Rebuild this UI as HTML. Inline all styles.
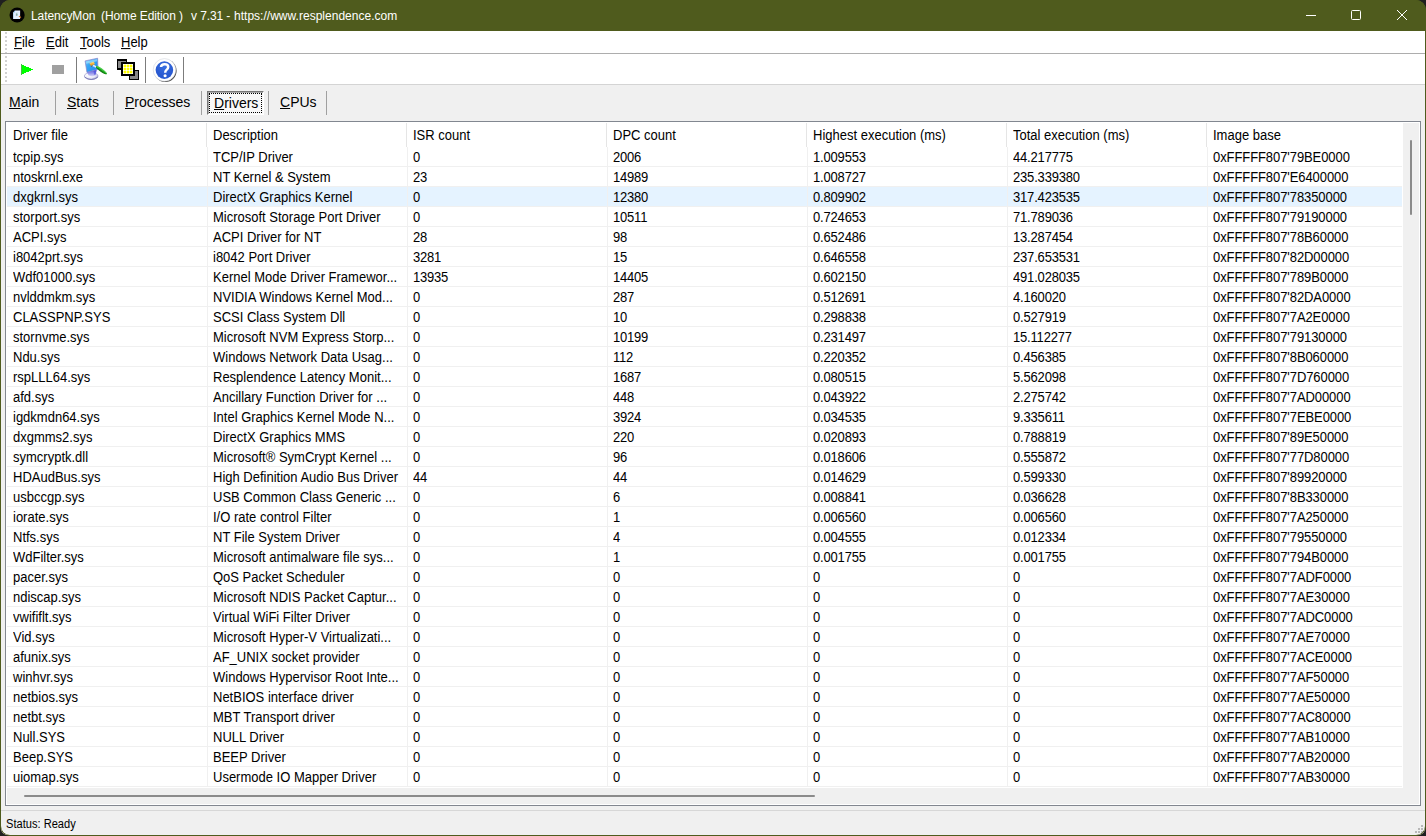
<!DOCTYPE html>
<html lang="en">
<head>
<meta charset="utf-8">
<title>LatencyMon</title>
<style>
html,body{margin:0;padding:0;}
body{width:1426px;height:836px;overflow:hidden;background:#202020;font-family:"Liberation Sans",Arial,sans-serif;color:#000;}
#win{position:absolute;left:0;top:0;width:1426px;height:836px;box-sizing:border-box;background:#4f5b1d;border-radius:10px;overflow:hidden;}
#client{left:1px;top:31px;width:1424px;height:804px;background:#f0f0f0;}
#frame{position:absolute;left:0;top:0;width:1426px;height:836px;box-sizing:border-box;border:1px solid #4f5b1d;border-radius:10px;pointer-events:none;z-index:50;}
.abs{position:absolute;}
#title{left:0;top:0;width:1426px;height:31px;background:#4f5b1d;}
#ttext,.tt{left:31px;top:9px;font-size:12px;line-height:15px;color:#fff;white-space:nowrap;letter-spacing:-0.1px;}
#menubar{left:1px;top:31px;width:1424px;height:22px;background:#fff;}
.mi{top:35px;font-size:13px;line-height:15px;white-space:nowrap;transform:scaleY(1.075);transform-origin:0 12.5px;}
.mi u,.tab u{text-decoration:underline;text-decoration-thickness:1px;text-underline-offset:1px;}
#tbline1{left:1px;top:53px;width:1424px;height:1px;background:#adadad;}
#toolbar{left:1px;top:54px;width:1424px;height:30px;background:#fff;}
#tbline2{left:1px;top:84px;width:1424px;height:1px;background:#d4d4d4;}
.vsep{width:1px;background:#7c7c7c;top:57px;height:26px;}
.tsep{width:1px;background:#a0a0a0;top:91px;height:24px;}
.tab{top:94px;font-size:14px;line-height:17px;white-space:nowrap;}
#list{left:5px;top:121px;width:1416px;height:685px;box-sizing:border-box;border:1px solid #828790;background:#fff;}
#lv{left:0;top:0;width:1426px;height:836px;font-size:13px;}
.h{top:123px;height:25px;line-height:26px;white-space:nowrap;transform:scaleY(1.075);transform-origin:0 17.5px;}
.r{position:absolute;left:7px;width:1395px;height:19px;border-bottom:1px solid #f0f0f0;line-height:19px;white-space:nowrap;}
.r.sel{background:#e5f3ff;}
.c{position:absolute;top:1px;transform:scaleY(1.075);transform-origin:0 14.5px;}
.c0{left:6px}.c1{left:206px}.c2{left:406px;letter-spacing:-0.2px}.c3{left:606px;letter-spacing:-0.2px}.c4{left:806px;letter-spacing:-0.18px}.c5{left:1006px;letter-spacing:-0.18px}.c6{left:1206px;letter-spacing:-0.08px}
.cl{width:1px;background:#f0f0f0;top:147px;height:640px;}
.hl{width:1px;background:#e5e5e5;top:123px;height:24px;}
#vsb{left:1403px;top:123px;width:16px;height:681px;background:#f0f0f0;}
#hsb{left:7px;top:788px;width:1412px;height:16px;background:#f0f0f0;}
#stline{left:1px;top:810px;width:1424px;height:1px;background:#d7d7d7;}
#status{left:6px;top:817px;font-size:12px;line-height:15px;white-space:nowrap;transform:scaleX(0.925);transform-origin:0 0;}
</style>
</head>
<body>
<div id="win">
<div id="client" class="abs"></div>
<div id="title" class="abs"></div>
<svg class="abs" style="left:9px;top:7px" width="17" height="17" viewBox="0 0 17 17"><circle cx="8.1" cy="8" r="7.6" fill="#000"/><path d="M5.9 3.4 L11.1 3.4 L11.1 12 L4.2 12 L4.2 5.6 Z" fill="#e6f2ff"/><path d="M4.2 5.6 L5.9 3.4 L5.9 5.6 Z" fill="#7ab8f0"/><path d="M4.5 6 V12" stroke="#bfe6ff" stroke-width="0.7"/><ellipse cx="7.8" cy="7.4" rx="0.8" ry="1.5" fill="#86b0a4"/><path d="M6.6 5.6 L9.6 5.6 M6.4 6 V9.4" stroke="#cfe0f0" stroke-width="0.6" fill="none"/><path d="M9.9 9.1 L12 10.5" stroke="#d87828" stroke-width="1.1"/></svg>
<div id="ttext" class="abs">LatencyMon</div>
<div class="abs tt" style="left:101px">(Home Edition )</div>
<div class="abs tt" style="left:191px">v 7.31 -</div>
<div class="abs tt" style="left:234px;letter-spacing:0.02px">https://www.resplendence.com</div>
<svg class="abs" style="left:1290px;top:0" width="136" height="31" viewBox="0 0 136 31" fill="none" stroke="#fff" stroke-width="1"><path d="M16 15.5 H26"/><rect x="61.5" y="10.5" width="9" height="9" rx="1"/><path d="M107 10 L117 20 M117 10 L107 20"/></svg>
<div id="menubar" class="abs"></div>
<div class="abs mi" style="left:14px"><u>F</u>ile</div>
<div class="abs mi" style="left:46px"><u>E</u>dit</div>
<div class="abs mi" style="left:80px"><u>T</u>ools</div>
<div class="abs mi" style="left:121px"><u>H</u>elp</div>
<div id="tbline1" class="abs"></div>
<div id="toolbar" class="abs"></div>
<div id="tbline2" class="abs"></div>
<svg class="abs" style="left:0;top:31px" width="200" height="54" viewBox="0 31 200 54">
<defs>
<linearGradient id="gScr" x1="0" y1="0" x2="1" y2="1"><stop offset="0" stop-color="#7fd0ff"/><stop offset="0.4" stop-color="#36a4f4"/><stop offset="1" stop-color="#1c84ee"/></linearGradient>
<linearGradient id="gNeck" x1="0" y1="0" x2="0" y2="1"><stop offset="0" stop-color="#4a4ee0"/><stop offset="0.6" stop-color="#9c9cec"/><stop offset="1" stop-color="#d8d8f8"/></linearGradient>
<radialGradient id="gBase" cx="0.35" cy="0.35" r="0.8"><stop offset="0" stop-color="#ffffff"/><stop offset="0.55" stop-color="#ececf8"/><stop offset="1" stop-color="#9898d0"/></radialGradient>
<linearGradient id="gBr" x1="0" y1="0" x2="0" y2="1"><stop offset="0" stop-color="#48d048"/><stop offset="0.5" stop-color="#18a018"/><stop offset="1" stop-color="#0a6a0a"/></linearGradient>
<linearGradient id="gHd" x1="0" y1="0" x2="0" y2="1"><stop offset="0" stop-color="#ffd468"/><stop offset="1" stop-color="#e08c10"/></linearGradient>
<radialGradient id="gHelp" cx="0.5" cy="0.3" r="0.8"><stop offset="0" stop-color="#3a70e0"/><stop offset="0.7" stop-color="#2858d0"/><stop offset="1" stop-color="#2a62d8"/></radialGradient>
<pattern id="chk" x="122" y="63" width="3" height="3" patternUnits="userSpaceOnUse"><rect width="3" height="3" fill="#ffff00"/><rect x="1" y="0" width="1" height="3" fill="#ffffa0"/><rect x="0" y="1" width="3" height="1" fill="#ffffa0"/><rect x="1" y="1" width="1" height="1" fill="#ffffff"/></pattern>
</defs>
<!-- grippers -->
<g fill="#d2d2d2" shape-rendering="crispEdges">
<rect x="5" y="32" width="2" height="2"/><rect x="5" y="36" width="2" height="2"/><rect x="5" y="40" width="2" height="2"/><rect x="5" y="44" width="2" height="2"/><rect x="5" y="48" width="2" height="2"/><rect x="5" y="52" width="2" height="1"/>
<rect x="5" y="56" width="2" height="2"/><rect x="5" y="60" width="2" height="2"/><rect x="5" y="64" width="2" height="2"/><rect x="5" y="68" width="2" height="2"/><rect x="5" y="72" width="2" height="2"/><rect x="5" y="76" width="2" height="2"/><rect x="5" y="80" width="2" height="2"/>
</g>
<!-- play -->
<path d="M21 64 L33 69.5 L21 75 Z" fill="#00ff00" shape-rendering="crispEdges"/>
<rect x="21" y="64" width="1" height="11" fill="#6a9a6a" opacity="0.7"/>
<!-- stop -->
<rect x="52" y="65" width="12" height="9" fill="#a0a0a0" shape-rendering="crispEdges"/>
<!-- monitor icon -->
<ellipse cx="91.2" cy="76" rx="6.9" ry="3.5" fill="url(#gBase)" stroke="#9090c8" stroke-width="0.6"/><path d="M84.6 77 Q91.2 82 97.9 77" fill="none" stroke="#6c6ca8" stroke-width="0.8"/>
<path d="M87 72 L96.6 69.4 L95.6 75.6 Q92 77 88.6 75.6 Z" fill="url(#gNeck)"/><path d="M93.6 70.4 L96.6 69.5 L95.8 74.6 L94 74.8 Z" fill="#4444d8" opacity="0.6"/>
<path d="M85.1 60.9 L97.6 58.2 L98 69.3 L86.9 72.3 Z" fill="url(#gScr)" stroke="#8c84c8" stroke-width="0.7"/>
<path d="M86 61.4 L97 59 L97.1 61.2 L86.3 63.8 Z" fill="#b8ecff" opacity="0.55"/>
<ellipse cx="101.3" cy="70.1" rx="6.9" ry="1.75" transform="rotate(35.4 101.3 70.1)" fill="url(#gBr)"/>
<path d="M97 66.8 Q101.4 68.6 105.6 72.6" stroke="#7cf07c" stroke-width="0.7" fill="none" stroke-dasharray="1.2 0.7"/>
<path d="M92.6 66.2 L93.6 64.8 L96.4 66.2 L95.8 67.8 Z" fill="#f0f6ff"/>
<path d="M93.4 66.6 L95.6 67.4" stroke="#6aa0f0" stroke-width="0.5"/>
<path d="M89.4 63.4 L93.7 61.8 L95 64 L90.9 66 Z" fill="url(#gHd)"/>
<path d="M89.8 63.4 L93.5 62.1" stroke="#ffe08a" stroke-width="0.6"/>
<path d="M91 66.2 L92.2 65.6 L92 66.8 Z" fill="#8a2810"/>
<!-- squares icon -->
<g shape-rendering="crispEdges">
<rect x="117" y="59" width="10" height="11" fill="#000"/><rect x="118" y="61" width="8" height="7" fill="#888"/>
<rect x="129" y="70" width="10" height="10" fill="#000"/><rect x="130" y="71" width="8" height="8" fill="#888"/>
<rect x="121" y="62" width="14" height="14" fill="#000"/><rect x="123" y="64" width="10" height="10" fill="url(#chk)"/>
</g>
<!-- help icon -->
<circle cx="165.3" cy="70.7" r="11.3" fill="#484848"/>
<circle cx="164.5" cy="69.9" r="11.3" fill="#fff" stroke="#c8ccd4" stroke-width="0.5"/>
<circle cx="164.4" cy="70.1" r="8.8" fill="url(#gHelp)"/>
<path d="M161 67 Q161.2 64.2 164.7 64.2 Q168.2 64.2 168.2 66.9 Q168.2 68.5 166.5 69.9 Q165.2 71 165.2 72.7" fill="none" stroke="#fff" stroke-width="2.5"/>
<circle cx="165.1" cy="75.7" r="1.55" fill="#fff"/>
</svg>

<div class="abs vsep" style="left:76px"></div>
<div class="abs vsep" style="left:145px"></div>
<div class="abs vsep" style="left:183px"></div>
<!-- tabs -->
<div class="abs tab" style="left:9px"><u>M</u>ain</div>
<div class="abs tab" style="left:67px"><u>S</u>tats</div>
<div class="abs tab" style="left:125px"><u>P</u>rocesses</div>
<div class="abs" id="drvbtn" style="left:207px;top:91px;width:57px;height:24px;box-sizing:border-box;border-style:solid;border-width:1px;border-color:#787878 #fff #fff #787878;background:#f8f8f8;box-shadow:inset 1px 1px 0 #a8a8a8;"><div style="position:absolute;left:1px;top:1px;right:1px;bottom:1px;border:1px dotted #000;"></div></div>
<div class="abs tab" style="left:214px;top:95px"><u>D</u>rivers</div>
<div class="abs tab" style="left:280px"><u>C</u>PUs</div>
<div class="abs tsep" style="left:55px"></div>
<div class="abs tsep" style="left:113px"></div>
<div class="abs tsep" style="left:201px"></div>
<div class="abs tsep" style="left:268px"></div>
<div class="abs tsep" style="left:326px"></div>
<!-- list -->
<div id="list" class="abs"></div>
<div id="lv" class="abs">
<div class="abs h" style="left:13px">Driver file</div>
<div class="abs h" style="left:213px">Description</div>
<div class="abs h" style="left:413px">ISR count</div>
<div class="abs h" style="left:613px">DPC count</div>
<div class="abs h" style="left:813px">Highest execution (ms)</div>
<div class="abs h" style="left:1013px">Total execution (ms)</div>
<div class="abs h" style="left:1213px">Image base</div>
<div class="r" style="top:147px"><span class="c c0">tcpip.sys</span><span class="c c1">TCP/IP Driver</span><span class="c c2">0</span><span class="c c3">2006</span><span class="c c4">1.009553</span><span class="c c5">44.217775</span><span class="c c6">0xFFFFF807'79BE0000</span></div>
<div class="r" style="top:167px"><span class="c c0">ntoskrnl.exe</span><span class="c c1">NT Kernel &amp; System</span><span class="c c2">23</span><span class="c c3">14989</span><span class="c c4">1.008727</span><span class="c c5">235.339380</span><span class="c c6">0xFFFFF807'E6400000</span></div>
<div class="r sel" style="top:187px"><span class="c c0">dxgkrnl.sys</span><span class="c c1">DirectX Graphics Kernel</span><span class="c c2">0</span><span class="c c3">12380</span><span class="c c4">0.809902</span><span class="c c5">317.423535</span><span class="c c6">0xFFFFF807'78350000</span></div>
<div class="r" style="top:207px"><span class="c c0">storport.sys</span><span class="c c1">Microsoft Storage Port Driver</span><span class="c c2">0</span><span class="c c3">10511</span><span class="c c4">0.724653</span><span class="c c5">71.789036</span><span class="c c6">0xFFFFF807'79190000</span></div>
<div class="r" style="top:227px"><span class="c c0">ACPI.sys</span><span class="c c1">ACPI Driver for NT</span><span class="c c2">28</span><span class="c c3">98</span><span class="c c4">0.652486</span><span class="c c5">13.287454</span><span class="c c6">0xFFFFF807'78B60000</span></div>
<div class="r" style="top:247px"><span class="c c0">i8042prt.sys</span><span class="c c1">i8042 Port Driver</span><span class="c c2">3281</span><span class="c c3">15</span><span class="c c4">0.646558</span><span class="c c5">237.653531</span><span class="c c6">0xFFFFF807'82D00000</span></div>
<div class="r" style="top:267px"><span class="c c0">Wdf01000.sys</span><span class="c c1">Kernel Mode Driver Framewor...</span><span class="c c2">13935</span><span class="c c3">14405</span><span class="c c4">0.602150</span><span class="c c5">491.028035</span><span class="c c6">0xFFFFF807'789B0000</span></div>
<div class="r" style="top:287px"><span class="c c0">nvlddmkm.sys</span><span class="c c1">NVIDIA Windows Kernel Mod...</span><span class="c c2">0</span><span class="c c3">287</span><span class="c c4">0.512691</span><span class="c c5">4.160020</span><span class="c c6">0xFFFFF807'82DA0000</span></div>
<div class="r" style="top:307px"><span class="c c0">CLASSPNP.SYS</span><span class="c c1">SCSI Class System Dll</span><span class="c c2">0</span><span class="c c3">10</span><span class="c c4">0.298838</span><span class="c c5">0.527919</span><span class="c c6">0xFFFFF807'7A2E0000</span></div>
<div class="r" style="top:327px"><span class="c c0">stornvme.sys</span><span class="c c1">Microsoft NVM Express Storp...</span><span class="c c2">0</span><span class="c c3">10199</span><span class="c c4">0.231497</span><span class="c c5">15.112277</span><span class="c c6">0xFFFFF807'79130000</span></div>
<div class="r" style="top:347px"><span class="c c0">Ndu.sys</span><span class="c c1">Windows Network Data Usag...</span><span class="c c2">0</span><span class="c c3">112</span><span class="c c4">0.220352</span><span class="c c5">0.456385</span><span class="c c6">0xFFFFF807'8B060000</span></div>
<div class="r" style="top:367px"><span class="c c0">rspLLL64.sys</span><span class="c c1">Resplendence Latency Monit...</span><span class="c c2">0</span><span class="c c3">1687</span><span class="c c4">0.080515</span><span class="c c5">5.562098</span><span class="c c6">0xFFFFF807'7D760000</span></div>
<div class="r" style="top:387px"><span class="c c0">afd.sys</span><span class="c c1">Ancillary Function Driver for ...</span><span class="c c2">0</span><span class="c c3">448</span><span class="c c4">0.043922</span><span class="c c5">2.275742</span><span class="c c6">0xFFFFF807'7AD00000</span></div>
<div class="r" style="top:407px"><span class="c c0">igdkmdn64.sys</span><span class="c c1">Intel Graphics Kernel Mode N...</span><span class="c c2">0</span><span class="c c3">3924</span><span class="c c4">0.034535</span><span class="c c5">9.335611</span><span class="c c6">0xFFFFF807'7EBE0000</span></div>
<div class="r" style="top:427px"><span class="c c0">dxgmms2.sys</span><span class="c c1">DirectX Graphics MMS</span><span class="c c2">0</span><span class="c c3">220</span><span class="c c4">0.020893</span><span class="c c5">0.788819</span><span class="c c6">0xFFFFF807'89E50000</span></div>
<div class="r" style="top:447px"><span class="c c0">symcryptk.dll</span><span class="c c1">Microsoft® SymCrypt Kernel ...</span><span class="c c2">0</span><span class="c c3">96</span><span class="c c4">0.018606</span><span class="c c5">0.555872</span><span class="c c6">0xFFFFF807'77D80000</span></div>
<div class="r" style="top:467px"><span class="c c0">HDAudBus.sys</span><span class="c c1">High Definition Audio Bus Driver</span><span class="c c2">44</span><span class="c c3">44</span><span class="c c4">0.014629</span><span class="c c5">0.599330</span><span class="c c6">0xFFFFF807'89920000</span></div>
<div class="r" style="top:487px"><span class="c c0">usbccgp.sys</span><span class="c c1">USB Common Class Generic ...</span><span class="c c2">0</span><span class="c c3">6</span><span class="c c4">0.008841</span><span class="c c5">0.036628</span><span class="c c6">0xFFFFF807'8B330000</span></div>
<div class="r" style="top:507px"><span class="c c0">iorate.sys</span><span class="c c1">I/O rate control Filter</span><span class="c c2">0</span><span class="c c3">1</span><span class="c c4">0.006560</span><span class="c c5">0.006560</span><span class="c c6">0xFFFFF807'7A250000</span></div>
<div class="r" style="top:527px"><span class="c c0">Ntfs.sys</span><span class="c c1">NT File System Driver</span><span class="c c2">0</span><span class="c c3">4</span><span class="c c4">0.004555</span><span class="c c5">0.012334</span><span class="c c6">0xFFFFF807'79550000</span></div>
<div class="r" style="top:547px"><span class="c c0">WdFilter.sys</span><span class="c c1">Microsoft antimalware file sys...</span><span class="c c2">0</span><span class="c c3">1</span><span class="c c4">0.001755</span><span class="c c5">0.001755</span><span class="c c6">0xFFFFF807'794B0000</span></div>
<div class="r" style="top:567px"><span class="c c0">pacer.sys</span><span class="c c1">QoS Packet Scheduler</span><span class="c c2">0</span><span class="c c3">0</span><span class="c c4">0</span><span class="c c5">0</span><span class="c c6">0xFFFFF807'7ADF0000</span></div>
<div class="r" style="top:587px"><span class="c c0">ndiscap.sys</span><span class="c c1">Microsoft NDIS Packet Captur...</span><span class="c c2">0</span><span class="c c3">0</span><span class="c c4">0</span><span class="c c5">0</span><span class="c c6">0xFFFFF807'7AE30000</span></div>
<div class="r" style="top:607px"><span class="c c0">vwififlt.sys</span><span class="c c1">Virtual WiFi Filter Driver</span><span class="c c2">0</span><span class="c c3">0</span><span class="c c4">0</span><span class="c c5">0</span><span class="c c6">0xFFFFF807'7ADC0000</span></div>
<div class="r" style="top:627px"><span class="c c0">Vid.sys</span><span class="c c1">Microsoft Hyper-V Virtualizati...</span><span class="c c2">0</span><span class="c c3">0</span><span class="c c4">0</span><span class="c c5">0</span><span class="c c6">0xFFFFF807'7AE70000</span></div>
<div class="r" style="top:647px"><span class="c c0">afunix.sys</span><span class="c c1">AF_UNIX socket provider</span><span class="c c2">0</span><span class="c c3">0</span><span class="c c4">0</span><span class="c c5">0</span><span class="c c6">0xFFFFF807'7ACE0000</span></div>
<div class="r" style="top:667px"><span class="c c0">winhvr.sys</span><span class="c c1">Windows Hypervisor Root Inte...</span><span class="c c2">0</span><span class="c c3">0</span><span class="c c4">0</span><span class="c c5">0</span><span class="c c6">0xFFFFF807'7AF50000</span></div>
<div class="r" style="top:687px"><span class="c c0">netbios.sys</span><span class="c c1">NetBIOS interface driver</span><span class="c c2">0</span><span class="c c3">0</span><span class="c c4">0</span><span class="c c5">0</span><span class="c c6">0xFFFFF807'7AE50000</span></div>
<div class="r" style="top:707px"><span class="c c0">netbt.sys</span><span class="c c1">MBT Transport driver</span><span class="c c2">0</span><span class="c c3">0</span><span class="c c4">0</span><span class="c c5">0</span><span class="c c6">0xFFFFF807'7AC80000</span></div>
<div class="r" style="top:727px"><span class="c c0">Null.SYS</span><span class="c c1">NULL Driver</span><span class="c c2">0</span><span class="c c3">0</span><span class="c c4">0</span><span class="c c5">0</span><span class="c c6">0xFFFFF807'7AB10000</span></div>
<div class="r" style="top:747px"><span class="c c0">Beep.SYS</span><span class="c c1">BEEP Driver</span><span class="c c2">0</span><span class="c c3">0</span><span class="c c4">0</span><span class="c c5">0</span><span class="c c6">0xFFFFF807'7AB20000</span></div>
<div class="r" style="top:767px"><span class="c c0">uiomap.sys</span><span class="c c1">Usermode IO Mapper Driver</span><span class="c c2">0</span><span class="c c3">0</span><span class="c c4">0</span><span class="c c5">0</span><span class="c c6">0xFFFFF807'7AB30000</span></div>
<div class="abs cl" style="left:207px"></div><div class="abs cl" style="left:407px"></div><div class="abs cl" style="left:607px"></div><div class="abs cl" style="left:807px"></div><div class="abs cl" style="left:1007px"></div><div class="abs cl" style="left:1207px"></div>
<div class="abs hl" style="left:206px"></div><div class="abs hl" style="left:406px"></div><div class="abs hl" style="left:606px"></div><div class="abs hl" style="left:806px"></div><div class="abs hl" style="left:1006px"></div><div class="abs hl" style="left:1206px"></div>
</div>
<div id="vsb" class="abs"></div>
<div class="abs" style="left:1410px;top:140px;width:2px;height:75px;background:#8b8b8b;border-radius:1px"></div>
<div id="hsb" class="abs"></div>
<div class="abs" style="left:24px;top:795px;width:791px;height:2px;background:#8b8b8b;border-radius:1px"></div>
<div id="stline" class="abs"></div>
<svg class="abs" style="left:1412px;top:822px" width="13" height="13" viewBox="1412 822 13 13" shape-rendering="crispEdges" fill="#b8b8b8"><rect x="1421" y="825" width="2" height="2"/><rect x="1418" y="828" width="2" height="2"/><rect x="1421" y="828" width="2" height="2"/><rect x="1415" y="831" width="2" height="2"/><rect x="1418" y="831" width="2" height="2"/><rect x="1421" y="831" width="2" height="2"/></svg>
<div id="status" class="abs">Status: Ready</div>
<div id="frame"></div>
</div>
</body>
</html>
